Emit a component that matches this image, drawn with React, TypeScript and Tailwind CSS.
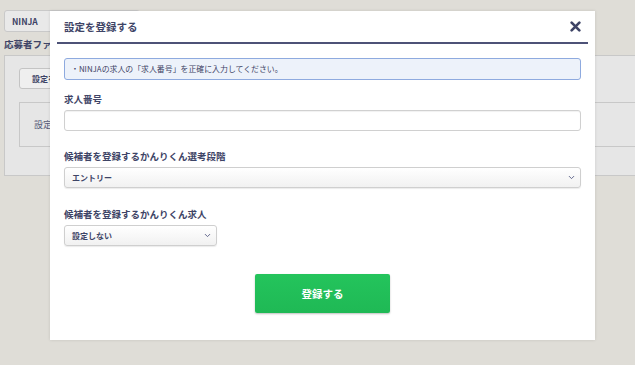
import { ChevronDown } from "lucide-react";

const font = { fontFamily: '"Noto Sans CJK JP", "Noto Sans", sans-serif' };

const SelectBox = ({ value, className }: { value: string; className: string }) => (
  <div
    className={`flex items-center justify-between rounded-[3px] border border-[#cfcfcf] bg-gradient-to-b from-white to-[#f1f1f1] pl-[7px] pr-[4px] shadow-[0_1px_1px_rgba(0,0,0,0.08)] ${className}`}
  >
    <span className="text-[8px] font-bold leading-none text-[#3e4466]">{value}</span>
    <ChevronDown size={9} strokeWidth={2.5} className="text-[#5a6088]" />
  </div>
);

const App = () => {
  return (
    <div className="relative h-[365px] w-[635px] overflow-hidden bg-[#dfddd7]" style={font}>
      {/* page behind the modal */}
      <div className="pl-[4px] pt-[10px]">
        <div className="flex h-[22px] w-[136px] items-center rounded-[3px] border border-[#c9c9c9] bg-[#e9e9e9] pl-[7px] text-[8.5px] font-bold text-[#3e4466]">
          NINJA
        </div>
        <div className="mt-[5px] text-[9.5px] font-bold leading-[14px] text-[#3e4466]">
          応募者ファイル連携設定
        </div>
        <div className="mt-[4px] h-[121px] w-[700px] border border-[#c8c8c8] bg-[#e6e6e6] pl-[14px] pt-[12px]">
          <div className="flex h-[21px] w-[80px] items-center rounded-[3px] border border-[#c4c4c4] bg-[#efefef] pl-[12px] text-[8px] font-bold text-[#3e4466]">
            設定を登録
          </div>
          <div className="mt-[13px] flex h-[45px] w-[700px] items-center border border-[#c8c8c8] pl-[14px] text-[9px] text-[#555a78]">
            設定されていません
          </div>
        </div>
      </div>

      {/* modal */}
      <div className="absolute left-[50px] top-[11px] flex h-[329px] w-[545px] flex-col bg-white px-[14px] shadow-[0_0_3px_rgba(0,0,0,0.12)]">
        <div className="-mx-[7px] flex h-[33px] items-center justify-between border-b-2 border-[#4d5277] pl-[7px] pr-[7px]">
          <span className="text-[10.5px] font-bold text-[#3e4466]">設定を登録する</span>
          <svg width="11" height="11" viewBox="0 0 10 10">
            <path d="M1.5 1.5 L8.5 8.5 M8.5 1.5 L1.5 8.5" stroke="#3e4466" strokeWidth="2.4" strokeLinecap="round" />
          </svg>
        </div>

        <div className="mt-[14px] flex h-[22px] items-center rounded-[3px] border border-[#8eaadf] bg-[#edf2fa] pl-[6px] text-[7.9px] text-[#3e4466]">
          ・NINJAの求人の「求人番号」を正確に入力してください。
        </div>

        <div className="mt-[13px] text-[9.5px] font-bold leading-[12px] text-[#3e4466]">求人番号</div>
        <div className="mt-[5px] h-[21px] rounded-[3px] border border-[#d0d0d0] bg-white shadow-[inset_0_1px_1px_rgba(0,0,0,0.06)]" />

        <div className="mt-[19px] text-[9.5px] font-bold leading-[12px] text-[#3e4466]">
          候補者を登録するかんりくん選考段階
        </div>
        <SelectBox value="エントリー" className="mt-[5px] h-[21px]" />

        <div className="mt-[20px] text-[9.5px] font-bold leading-[12px] text-[#3e4466]">
          候補者を登録するかんりくん求人
        </div>
        <SelectBox value="設定しない" className="mt-[5px] h-[21px] w-[153px]" />

        <div className="mt-[28px] flex justify-center">
          <button className="flex h-[39px] w-[135px] items-center justify-center rounded-[2px] bg-gradient-to-b from-[#24c45c] to-[#1fb955] text-[10.5px] font-bold text-white shadow-[0_1px_2px_rgba(0,0,0,0.25)]">
            登録する
          </button>
        </div>
      </div>
    </div>
  );
};

export default App;
